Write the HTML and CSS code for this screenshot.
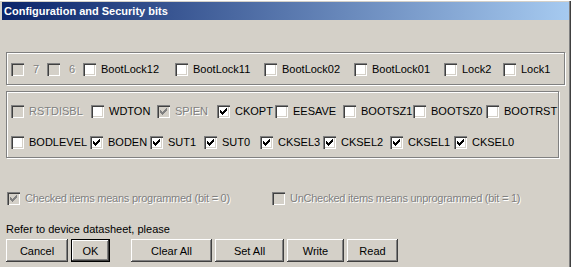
FILE: index.html
```html
<!DOCTYPE html>
<html lang="en">
<head>
    <meta charset="UTF-8" />
    <title>Configuration and Security bits</title>
    <link rel="stylesheet" href="styles.css">
</head>
<body>
    <div class="window">
        <div class="titlebar">Configuration and Security bits</div>

        <div class="client">
            <div class="group group-lock">
                <div class="row row-lock">
                    <label class="item off"><span class="box"></span><span class="cap pad">7</span></label>
                    <label class="item off"><span class="box"></span><span class="cap pad">6</span></label>
                    <label class="item"><span class="box"></span><span class="cap">BootLock12</span></label>
                    <label class="item"><span class="box"></span><span class="cap">BootLock11</span></label>
                    <label class="item"><span class="box"></span><span class="cap">BootLock02</span></label>
                    <label class="item"><span class="box"></span><span class="cap">BootLock01</span></label>
                    <label class="item"><span class="box"></span><span class="cap">Lock2</span></label>
                    <label class="item"><span class="box"></span><span class="cap">Lock1</span></label>
                </div>
            </div>

            <div class="group group-fuse">
                <div class="row row-fuse-a">
                    <label class="item off"><span class="box"></span><span class="cap">RSTDISBL</span></label>
                    <label class="item"><span class="box"></span><span class="cap">WDTON</span></label>
                    <label class="item off"><span class="box"><svg class="tick" viewBox="0 0 7 7"><path d="M0 2h1v3h-1zM1 3h1v3h-1zM2 4h1v3h-1zM3 3h1v3h-1zM4 2h1v3h-1zM5 1h1v3h-1zM6 0h1v3h-1z"/></svg></span><span class="cap">SPIEN</span></label>
                    <label class="item"><span class="box"><svg class="tick" viewBox="0 0 7 7"><path d="M0 2h1v3h-1zM1 3h1v3h-1zM2 4h1v3h-1zM3 3h1v3h-1zM4 2h1v3h-1zM5 1h1v3h-1zM6 0h1v3h-1z"/></svg></span><span class="cap">CKOPT</span></label>
                    <label class="item"><span class="box"></span><span class="cap">EESAVE</span></label>
                    <label class="item"><span class="box"></span><span class="cap">BOOTSZ1</span></label>
                    <label class="item"><span class="box"></span><span class="cap">BOOTSZ0</span></label>
                    <label class="item"><span class="box"></span><span class="cap">BOOTRST</span></label>
                </div>
                <div class="row row-fuse-b">
                    <label class="item"><span class="box"></span><span class="cap">BODLEVEL</span></label>
                    <label class="item"><span class="box"><svg class="tick" viewBox="0 0 7 7"><path d="M0 2h1v3h-1zM1 3h1v3h-1zM2 4h1v3h-1zM3 3h1v3h-1zM4 2h1v3h-1zM5 1h1v3h-1zM6 0h1v3h-1z"/></svg></span><span class="cap">BODEN</span></label>
                    <label class="item"><span class="box"><svg class="tick" viewBox="0 0 7 7"><path d="M0 2h1v3h-1zM1 3h1v3h-1zM2 4h1v3h-1zM3 3h1v3h-1zM4 2h1v3h-1zM5 1h1v3h-1zM6 0h1v3h-1z"/></svg></span><span class="cap">SUT1</span></label>
                    <label class="item"><span class="box"><svg class="tick" viewBox="0 0 7 7"><path d="M0 2h1v3h-1zM1 3h1v3h-1zM2 4h1v3h-1zM3 3h1v3h-1zM4 2h1v3h-1zM5 1h1v3h-1zM6 0h1v3h-1z"/></svg></span><span class="cap">SUT0</span></label>
                    <label class="item"><span class="box"><svg class="tick" viewBox="0 0 7 7"><path d="M0 2h1v3h-1zM1 3h1v3h-1zM2 4h1v3h-1zM3 3h1v3h-1zM4 2h1v3h-1zM5 1h1v3h-1zM6 0h1v3h-1z"/></svg></span><span class="cap">CKSEL3</span></label>
                    <label class="item"><span class="box"><svg class="tick" viewBox="0 0 7 7"><path d="M0 2h1v3h-1zM1 3h1v3h-1zM2 4h1v3h-1zM3 3h1v3h-1zM4 2h1v3h-1zM5 1h1v3h-1zM6 0h1v3h-1z"/></svg></span><span class="cap">CKSEL2</span></label>
                    <label class="item"><span class="box"><svg class="tick" viewBox="0 0 7 7"><path d="M0 2h1v3h-1zM1 3h1v3h-1zM2 4h1v3h-1zM3 3h1v3h-1zM4 2h1v3h-1zM5 1h1v3h-1zM6 0h1v3h-1z"/></svg></span><span class="cap">CKSEL1</span></label>
                    <label class="item"><span class="box"><svg class="tick" viewBox="0 0 7 7"><path d="M0 2h1v3h-1zM1 3h1v3h-1zM2 4h1v3h-1zM3 3h1v3h-1zM4 2h1v3h-1zM5 1h1v3h-1zM6 0h1v3h-1z"/></svg></span><span class="cap">CKSEL0</span></label>
                </div>
            </div>

            <div class="legend">
                <label class="item off legend-item"><span class="box"><svg class="tick" viewBox="0 0 7 7"><path d="M0 2h1v3h-1zM1 3h1v3h-1zM2 4h1v3h-1zM3 3h1v3h-1zM4 2h1v3h-1zM5 1h1v3h-1zM6 0h1v3h-1z"/></svg></span><span class="cap">Checked items means programmed (bit = 0)</span></label>
                <label class="item off"><span class="box"></span><span class="cap">UnChecked items means unprogrammed (bit = 1)</span></label>
            </div>

            <p class="note">Refer to device datasheet, please</p>

            <div class="buttons">
                <button class="btn btn-cancel">Cancel</button>
                <button class="btn btn-ok">OK</button>
                <button class="btn btn-clear">Clear All</button>
                <button class="btn btn-set">Set All</button>
                <button class="btn btn-write">Write</button>
                <button class="btn btn-read">Read</button>
            </div>
        </div>
    </div>
</body>
</html>
```

FILE: styles.css
```css
body {
    margin: 0;
    background-color: #d4d0c8;
    font-family: "Liberation Sans", Arial, sans-serif;
    font-size: 11px;
    color: #000;
}

.window {
    width: 571px;
    height: 267px;
    box-sizing: border-box;
    padding: 1px 2px 0 1px;
    border-top: 1px solid #fff;
    box-shadow: inset -1px 0 #404040, inset -2px 0 #808080;
    overflow: hidden;
}

.titlebar {
    height: 18px;
    line-height: 18px;
    margin-left: 1px;
    padding-left: 2px;
    background: linear-gradient(to right, #0a246a, #a6caf0);
    color: #fff;
    font-weight: bold;
    font-size: 11px;
}

/* etched group frames */
.group {
    box-sizing: border-box;
    margin-left: 5px;
    border: 1px solid #808080;
    box-shadow: inset 1px 1px #fff, 1px 1px 0 #fff;
}

.group-lock {
    width: 559px;
    height: 33px;
    margin-top: 32px;
    padding: 10px 0 0 4px;
}

.group-fuse {
    width: 553px;
    height: 67px;
    margin-top: 6px;
    padding: 13px 0 0 4px;
    display: flex;
    flex-direction: column;
    gap: 18px;
}

.row {
    display: grid;
    height: 13px;
    align-items: center;
}

.row-lock {
    grid-template-columns: 36px 36px 92px 89px 90px 90px 59px auto;
}

.row-fuse-a {
    grid-template-columns: 80px 66px 60px 58px 68px 70px 73px auto;
}

.row-fuse-b {
    grid-template-columns: 79px 60px 54px 56px 63px 67px 64px auto;
}

.item {
    display: flex;
    align-items: center;
    gap: 5px;
    white-space: nowrap;
    line-height: 13px;
}

.cap.pad {
    padding-left: 4px;
}

.box {
    position: relative;
    flex: none;
    width: 13px;
    height: 13px;
    background-color: #fff;
    box-shadow: inset 1px 1px #808080, inset 2px 2px #404040, inset -1px -1px #fff, inset -2px -2px #d4d0c8;
}

.tick {
    position: absolute;
    left: 3px;
    top: 3px;
    width: 7px;
    height: 7px;
    fill: #000;
    shape-rendering: crispEdges;
}

.off .box {
    background-color: #d4d0c8;
}

.off .tick {
    fill: #808080;
}

.off .cap {
    color: #808080;
    text-shadow: 1px 1px 0 #fff;
}

.legend {
    display: flex;
    margin: 34px 0 0 6px;
    letter-spacing: -0.25px;
}

.legend-item {
    width: 265px;
}

.note {
    margin: 18px 0 0 5px;
    line-height: 13px;
}

.buttons {
    display: flex;
    gap: 3px;
    margin: 3px 0 0 5px;
}

.btn {
    height: 23px;
    padding: 0;
    border: none;
    background-color: #d4d0c8;
    font-family: "Liberation Sans", Arial, sans-serif;
    font-size: 11px;
    color: #000;
    box-shadow: inset -1px -1px #404040, inset 1px 1px #fff, inset -2px -2px #808080, inset 2px 2px #d4d0c8;
}

.btn-cancel { width: 62px; }

.btn-ok {
    width: 39px;
    border: 1px solid #000;
}

.btn-clear {
    width: 81px;
    margin-left: 18px;
}

.btn-set { width: 69px; }
.btn-write { width: 57px; }
.btn-read { width: 51px; }
```
